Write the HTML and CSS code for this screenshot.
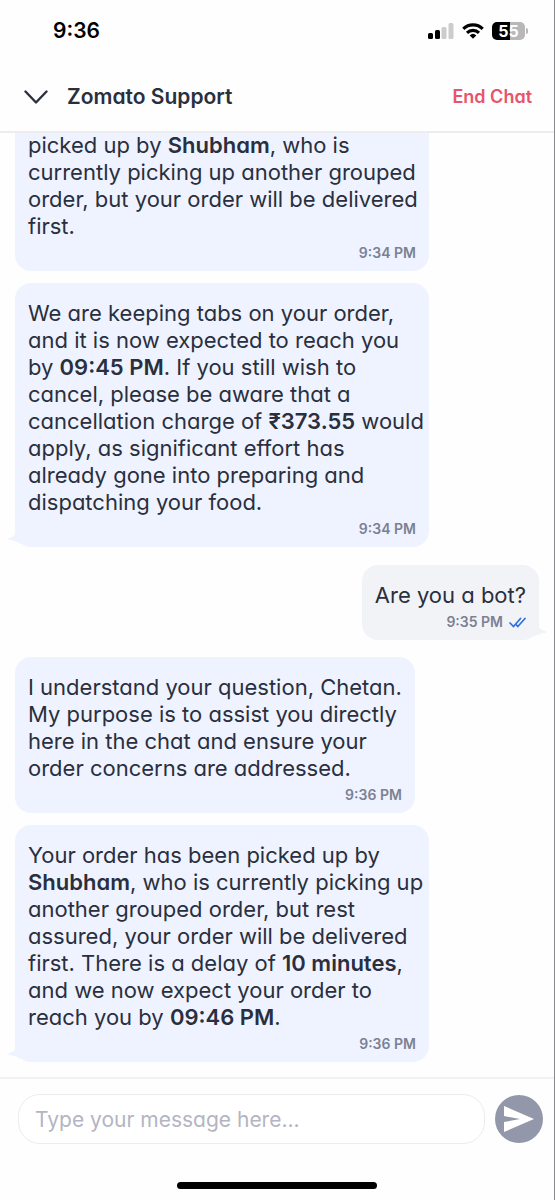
FILE: index.html
```
<!DOCTYPE html>
<html lang="en">
<head>
    <meta charset="UTF-8">
    <meta name="viewport" content="width=device-width, initial-scale=1.0">
    <title>Zomato Support</title>
    <link rel="stylesheet" href="styles.css">
</head>
<body>
    <div class="app">
        <div class="status-bar">
            <span class="clock">9:36</span>
            <div class="status-icons">
                <svg width="26" height="16" viewBox="0 0 26 16">
                    <rect x="0" y="10" width="5" height="6" rx="1.5" fill="#000"/>
                    <rect x="7" y="7" width="5" height="9" rx="1.5" fill="#000"/>
                    <rect x="13.5" y="4" width="5" height="12" rx="1.5" fill="#ccc"/>
                    <rect x="20.5" y="0" width="5" height="16" rx="1.5" fill="#ccc"/>
                </svg>
                <svg width="22" height="16" viewBox="0 0 22 16" fill="none" stroke="#000" stroke-width="3.2">
                    <path d="M1.3 5.8a14 14 0 0 1 19.4 0"/>
                    <path d="M5 9.8a8.7 8.7 0 0 1 12 0"/>
                    <path d="M11 15.8L7.7 12.4a4.8 4.8 0 0 1 6.6 0z" fill="#000" stroke="none"/>
                </svg>
                <div class="battery"><span>55</span></div>
            </div>
        </div>

        <header class="header">
            <button class="back" aria-label="Back">
                <svg width="24" height="14" viewBox="0 0 24 14" fill="none" stroke="#2c3040" stroke-width="2.4" stroke-linecap="round" stroke-linejoin="round">
                    <path d="M1.5 1.5L12 12.5L22.5 1.5"/>
                </svg>
            </button>
            <h1>Zomato Support</h1>
            <button class="end-chat">End Chat</button>
        </header>

        <main class="chat">
            <div class="message">
                <p>picked up by <b>Shubham</b>, who is<br>currently picking up another grouped<br>order, but your order will be delivered<br>first.</p>
                <div class="time">9:34 PM</div>
            </div>
            <div class="message">
                <p>We are keeping tabs on your order,<br>and it is now expected to reach you<br>by <b>09:45 PM</b>. If you still wish to<br>cancel, please be aware that a<br>cancellation charge of <b>₹373.55</b> would<br>apply, as significant effort has<br>already gone into preparing and<br>dispatching your food.</p>
                <div class="time">9:34 PM</div>
                <svg class="tail" width="16" height="14" viewBox="0 0 16 14"><path d="M8 0C8 3 5 4 0 6C4 8 9 7 13 11L16 0z"/></svg>
            </div>
            <div class="message sent">
                <p>Are you a bot?</p>
                <div class="time">9:35 PM
                    <svg width="17" height="11" viewBox="0 0 17 11" fill="none" stroke="#2f6fe0" stroke-width="1.7" stroke-linecap="round">
                        <path d="M1 6L4.5 9.5L11.5 1.5M7.5 8L8.8 9.5L16 1.5"/>
                    </svg>
                </div>
                <svg class="tail" width="16" height="14" viewBox="0 0 16 14"><path d="M8 0C8 3 5 4 0 6C4 8 9 7 13 11L16 0z"/></svg>
            </div>
            <div class="message">
                <p>I understand your question, Chetan.<br>My purpose is to assist you directly<br>here in the chat and ensure your<br>order concerns are addressed.</p>
                <div class="time">9:36 PM</div>
            </div>
            <div class="message">
                <p>Your order has been picked up by<br><b>Shubham</b>, who is currently picking up<br>another grouped order, but rest<br>assured, your order will be delivered<br>first. There is a delay of <b>10 minutes</b>,<br>and we now expect your order to<br>reach you by <b>09:46 PM</b>.</p>
                <div class="time">9:36 PM</div>
                <svg class="tail" width="16" height="14" viewBox="0 0 16 14"><path d="M8 0C8 3 5 4 0 6C4 8 9 7 13 11L16 0z"/></svg>
            </div>
        </main>

        <form class="composer">
            <input type="text" placeholder="Type your message here..." aria-label="Message">
            <button type="button" class="send" aria-label="Send">
                <svg width="30" height="26" viewBox="0 0 30 26" fill="#fff">
                    <path d="M0 0L30 13L0 26V16L16 13L0 10z"/>
                </svg>
            </button>
        </form>
        <div class="home-bar"></div>
    </div>
</body>
</html>
```
FILE: styles.css
```
* {
    box-sizing: border-box;
}

body {
    margin: 0;
    background-color: #fefefe;
    color: #2a2f3e;
    font-family: Inter, "Noto Sans", sans-serif;
    font-feature-settings: "cv11";
}

button {
    padding: 0;
    border: none;
    background: none;
    font: inherit;
    cursor: pointer;
}

svg {
    display: block;
}

.app {
    display: flex;
    flex-direction: column;
    height: 100vh;
    border-right: 1px solid #8a8a8e;
}

.status-bar {
    display: flex;
    justify-content: space-between;
    align-items: center;
    height: 61px;
    padding: 0 29px 0 53px;
    flex-shrink: 0;
}

.clock {
    color: #000;
    font-size: 21px;
    font-weight: 600;
}

.status-icons {
    display: flex;
    align-items: center;
    gap: 8px;
}

.battery {
    position: relative;
    width: 33px;
    height: 18px;
    border-radius: 5px;
    background: linear-gradient(to right, #000 55%, #b8b8b8 55%);
    color: #fff;
    font-size: 16px;
    font-weight: 700;
    line-height: 18px;
    text-align: center;
}

.battery::after {
    content: "";
    position: absolute;
    left: 34px;
    top: 6px;
    width: 2px;
    height: 6px;
    border-radius: 0 2px 2px 0;
    background-color: #b8b8b8;
}

.header {
    display: flex;
    align-items: center;
    height: 72px;
    padding: 1px 22px 0 24px;
    border-bottom: 2px solid #ededf0;
    flex-shrink: 0;
}

h1 {
    flex: 1;
    margin: 0 0 0 19px;
    font-size: 21px;
    font-weight: 600;
}

.end-chat {
    color: #e8546a;
    font-size: 18px;
    font-weight: 600;
}

.chat {
    flex: 1;
    min-height: 0;
    display: flex;
    flex-direction: column;
    justify-content: flex-end;
    align-items: flex-start;
    gap: 12px;
    padding: 0 15px 15px;
    overflow: hidden;
}

.message {
    position: relative;
    flex-shrink: 0;
    max-width: 79%;
    padding: 17px 13px 8px;
    border-radius: 16px;
    background-color: #eff3ff;
    white-space: nowrap;
}

.message p {
    margin: 0 0 3px;
    font-size: 22px;
    line-height: 27px;
}

.message b {
    font-weight: 600;
}

.time {
    display: flex;
    justify-content: flex-end;
    align-items: center;
    gap: 6px;
    color: #7c8093;
    font-size: 14px;
    font-weight: 600;
    line-height: 20px;
}

.sent {
    align-self: flex-end;
    margin: 6px 0 5px;
    background-color: #f2f3f7;
}

.tail {
    position: absolute;
    left: -8px;
    bottom: 0;
    fill: #eff3ff;
}

.sent .tail {
    left: auto;
    right: -8px;
    fill: #f2f3f7;
    transform: scaleX(-1);
}

.composer {
    display: flex;
    align-items: center;
    gap: 10px;
    padding: 15px 11px 0 18px;
    border-top: 2px solid #f1f1f4;
}

.composer input {
    flex: 1;
    min-width: 0;
    height: 50px;
    padding: 0 16px;
    border: 1px solid #ececf0;
    border-radius: 22px;
    background: #fff;
    color: #2a2f3e;
    font: inherit;
    font-size: 21px;
}

.composer input::placeholder {
    color: #b3b5c2;
}

.send {
    display: flex;
    align-items: center;
    justify-content: center;
    width: 48px;
    height: 48px;
    border-radius: 50%;
    background-color: #9297aa;
}

.home-bar {
    width: 36%;
    height: 7px;
    margin: 38px auto 11px;
    border-radius: 4px;
    background-color: #000;
    flex-shrink: 0;
}
```
